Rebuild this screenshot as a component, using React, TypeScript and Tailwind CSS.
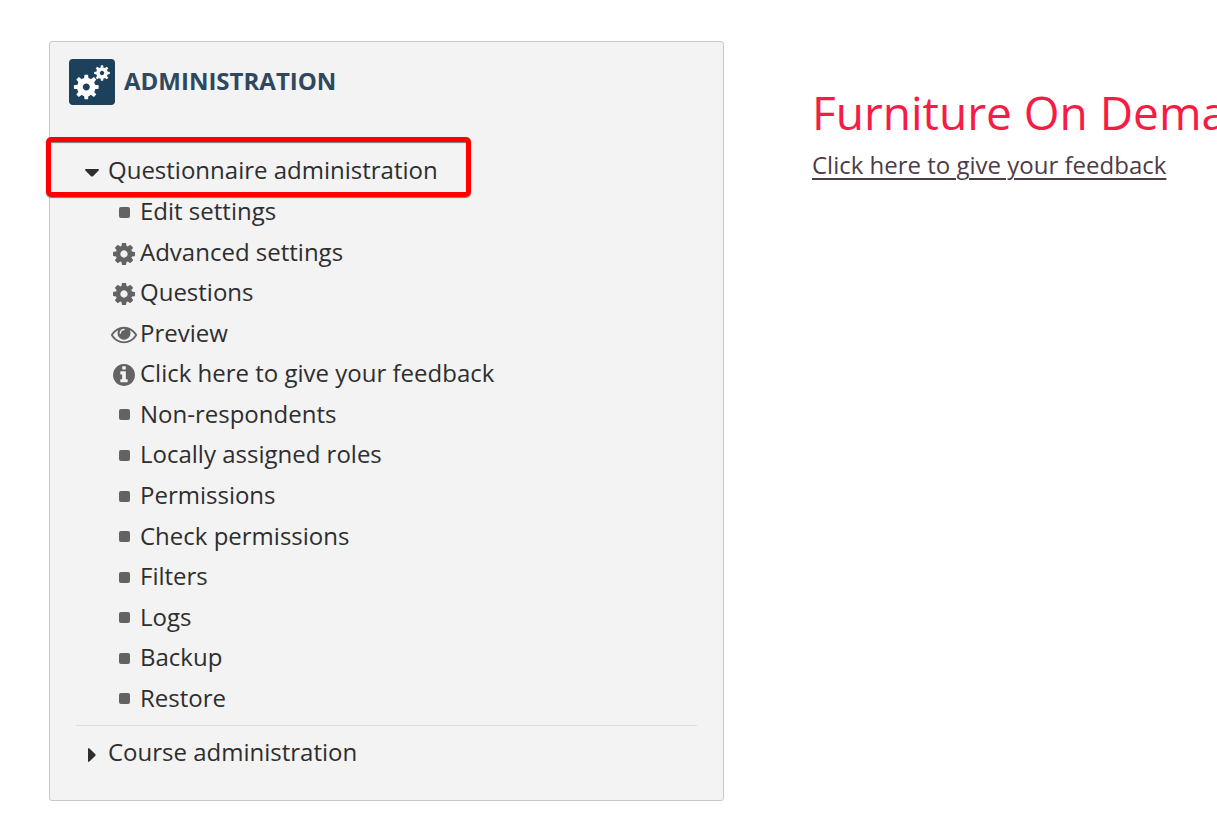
import { useState } from 'react';
import { clsx } from 'clsx';

type IconName = 'square' | 'cog' | 'eye' | 'info';

interface MenuItem {
  label: string;
  icon: IconName;
}

const menuItems: MenuItem[] = [
  { label: 'Edit settings', icon: 'square' },
  { label: 'Advanced settings', icon: 'cog' },
  { label: 'Questions', icon: 'cog' },
  { label: 'Preview', icon: 'eye' },
  { label: 'Click here to give your feedback', icon: 'info' },
  { label: 'Non-respondents', icon: 'square' },
  { label: 'Locally assigned roles', icon: 'square' },
  { label: 'Permissions', icon: 'square' },
  { label: 'Check permissions', icon: 'square' },
  { label: 'Filters', icon: 'square' },
  { label: 'Logs', icon: 'square' },
  { label: 'Backup', icon: 'square' },
  { label: 'Restore', icon: 'square' },
];

const cogPath =
  'M1024 896q0-106-75-181t-181-75-181 75-75 181 75 181 181 75 181-75 75-181zm512-109v222q0 12-8 23t-20 13l-185 28q-19 54-39 91 35 50 107 138 10 12 10 25t-9 23q-27 37-99 108t-94 71q-12 0-26-9l-138-108q-44 23-91 38-16 136-29 186-7 28-36 28h-222q-14 0-24.5-8.5t-11.5-21.5l-28-184q-49-16-90-37l-141 107q-10 9-25 9-14 0-25-11-126-114-165-168-7-10-7-23 0-12 8-23 15-21 51-66.5t54-70.5q-27-50-41-99l-183-27q-13-2-21-12.5t-8-23.5v-222q0-12 8-23t19-13l186-28q14-46 39-92-40-57-107-138-10-12-10-24 0-10 9-23 26-36 98.5-107.5t94.5-71.5q13 0 26 10l138 107q44-23 91-38 16-136 29-186 7-28 36-28h222q14 0 24.5 8.5t11.5 21.5l28 184q49 16 90 37l142-107q9-9 24-9 13 0 25 10 129 119 165 170 7 8 7 22 0 12-8 23-15 21-51 66.5t-54 70.5q26 50 41 98l183 28q13 2 21 12.5t8 23.5z';
const eyePath =
  'M1664 960q-152-236-381-353 61 104 61 225 0 185-131.5 316.5t-316.5 131.5-316.5-131.5-131.5-316.5q0-121 61-225-229 117-381 353 133 205 333.5 326.5t434.5 121.5 434.5-121.5 333.5-326.5zm-720-384q0-20-14-34t-34-14q-125 0-214.5 89.5t-89.5 214.5q0 20 14 34t34 14 34-14 14-34q0-86 61-147t147-61q20 0 34-14t14-34zm848 384q0 34-20 69-140 230-376.5 368.5t-499.5 138.5-499.5-139-376.5-368q-20-35-20-69t20-69q140-229 376.5-368t499.5-139 499.5 139 376.5 368q20 35 20 69z';
const infoPath =
  'M1152 1376v-160q0-14-9-23t-23-9h-96v-512q0-14-9-23t-23-9h-320q-14 0-23 9t-9 23v160q0 14 9 23t23 9h96v320h-96q-14 0-23 9t-9 23v160q0 14 9 23t23 9h448q14 0 23-9t9-23zm-128-896v-160q0-14-9-23t-23-9h-192q-14 0-23 9t-9 23v160q0 14 9 23t23 9h192q14 0 23-9t9-23zm640 416q0 209-103 385.5t-279.5 279.5-385.5 103-385.5-103-279.5-279.5-103-385.5 103-385.5 279.5-279.5 385.5-103 385.5 103 279.5 279.5 103 385.5z';

function ItemIcon({ name }: { name: IconName }) {
  switch (name) {
    case 'cog':
      return (
        <svg viewBox="0 128 1536 1536" className="w-[22px] h-[22px] fill-current" aria-hidden="true">
          <path d={cogPath} />
        </svg>
      );
    case 'eye':
      return (
        <svg viewBox="0 64 1792 1792" className="w-[26px] h-[26px] shrink-0 fill-current" aria-hidden="true">
          <path d={eyePath} />
        </svg>
      );
    case 'info':
      return (
        <svg viewBox="128 128 1536 1536" className="w-[22px] h-[22px] fill-current" aria-hidden="true">
          <path d={infoPath} />
        </svg>
      );
    default:
      return <span className="w-[11px] h-[11px] rounded-xs bg-current" />;
  }
}

// Eight-toothed gear centred on 0,0 with an outer radius of 12
function Gear({ transform }: { transform: string }) {
  return (
    <g transform={transform}>
      <circle r="6.2" fill="none" stroke="white" strokeWidth="5.6" />
      {[0, 45, 90, 135, 180, 225, 270, 315].map((angle) => (
        <path key={angle} d="M-2.2-8 L-1.7-12 H1.7 L2.2-8z" fill="white" transform={`rotate(${angle})`} />
      ))}
    </g>
  );
}

function AdminLogo() {
  return (
    <svg viewBox="0 0 46 46" className="w-[46px] h-[46px] shrink-0" aria-hidden="true">
      <rect width="46" height="46" rx="4" fill="#1d405b" />
      <Gear transform="translate(17.3 28) scale(1.03)" />
      <Gear transform="translate(33 14) scale(0.65)" />
    </svg>
  );
}

interface BranchButtonProps {
  label: string;
  open: boolean;
  highlighted?: boolean;
  onClick: () => void;
}

function BranchButton({ label, open, highlighted, onClick }: BranchButtonProps) {
  return (
    <button
      type="button"
      aria-expanded={open}
      onClick={onClick}
      className="relative w-full flex items-center text-left cursor-pointer"
    >
      <span className="w-8 pt-1.5 flex justify-center shrink-0">
        {open ? (
          <svg viewBox="0 0 14 8" className="w-[14px] h-2 fill-current" aria-hidden="true">
            <path d="M0.8 0H13.2Q14.4 0.4 13.6 1.4L8 7.2Q7 8 6 7.2L0.4 1.4Q-0.4 0.4 0.8 0z" />
          </svg>
        ) : (
          <svg viewBox="0 0 8 14" className="w-2 h-[14px] fill-current" aria-hidden="true">
            <path d="M0 0.8V13.2Q0.4 14.4 1.4 13.6L7.2 8Q8 7 7.2 6L1.4 0.4Q0.4-0.4 0 0.8z" />
          </svg>
        )}
      </span>
      <span>{label}</span>
      {highlighted && (
        <span className="absolute -left-[30px] -top-[13px] w-[425px] h-[60px] rounded-[5px] border-5 border-[#ff0000] shadow-[0_1px_1px_#777,inset_0_1px_1px_#777] pointer-events-none" />
      )}
    </button>
  );
}

export default function App() {
  const [questionnaireOpen, setQuestionnaireOpen] = useState(true);
  const [courseOpen, setCourseOpen] = useState(false);

  return (
    <div className="min-h-screen overflow-hidden bg-white pt-[41px] pl-[49px] pb-[14px] grid grid-cols-[minmax(0,5fr)_minmax(0,3fr)] items-start gap-x-[88px] font-['Open_Sans',sans-serif] text-[24px] text-[#2e2e2e]">
      <aside className="bg-[#f3f3f3] border border-[#c8c8c8] rounded-[3px] pt-[17px] pb-7">
        <div className="flex items-center gap-[9px] px-[19px]">
          <AdminLogo />
          <h2 className="pb-0.5 font-bold text-[#2f4860]">ADMINISTRATION</h2>
        </div>

        <nav className="mt-[45px] px-[26px] leading-10">
          <BranchButton
            label="Questionnaire administration"
            open={questionnaireOpen}
            highlighted
            onClick={() => setQuestionnaireOpen(!questionnaireOpen)}
          />
          {questionnaireOpen && (
            <ul className="mt-px pl-9 min-h-[527px] flex flex-col justify-between">
              {menuItems.map((item) => (
                <li key={item.label}>
                  <a href="#" className="flex items-center gap-1">
                    <span
                      className={clsx(
                        'w-6 flex justify-center shrink-0 text-[#636363]',
                        item.icon === 'square' ? 'pt-0.5' : 'pt-1'
                      )}
                    >
                      <ItemIcon name={item.icon} />
                    </span>
                    {item.label}
                  </a>
                </li>
              ))}
            </ul>
          )}
          <hr className="mt-[7px] mb-[6px] border-[#dddddd]" />
          <BranchButton label="Course administration" open={courseOpen} onClick={() => setCourseOpen(!courseOpen)} />
        </nav>
      </aside>

      <main className="pt-10">
        <h1 className="text-[46px] leading-[62px] text-[#f71b45] whitespace-nowrap">Furniture On Demand</h1>
        <a href="#" className="block mt-1 text-[#4e3b47] underline decoration-2 underline-offset-4">
          Click here to give your feedback
        </a>
      </main>
    </div>
  );
}
